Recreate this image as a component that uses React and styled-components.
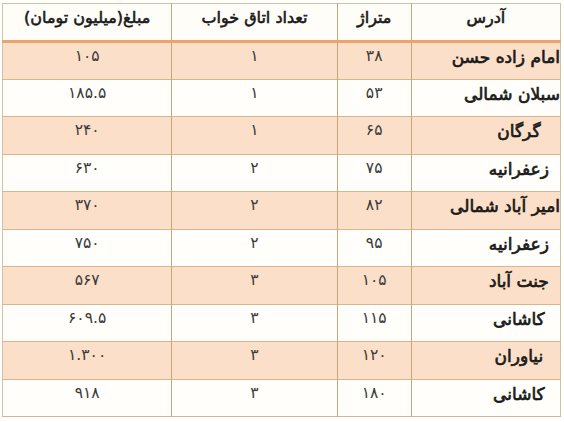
import React from 'react'
import styled, { createGlobalStyle } from 'styled-components'

const rows = [
  ['امام زاده حسن', '۳۸', '۱', '۱۰۵'],
  ['سبلان شمالی', '۵۳', '۱', '۱۸۵.۵'],
  ['گرگان', '۶۵', '۱', '۲۴۰'],
  ['زعفرانیه', '۷۵', '۲', '۶۳۰'],
  ['امیر آباد شمالی', '۸۲', '۲', '۳۷۰'],
  ['زعفرانیه', '۹۵', '۲', '۷۵۰'],
  ['جنت آباد', '۱۰۵', '۳', '۵۶۷'],
  ['کاشانی', '۱۱۵', '۳', '۶۰۹.۵'],
  ['نیاوران', '۱۲۰', '۳', '۱.۳۰۰'],
  ['کاشانی', '۱۸۰', '۳', '۹۱۸']
]

const GlobalStyle = createGlobalStyle`
  body {
    margin: 0;
    background: #ffffff;
    font-family: "DejaVu Sans", Tahoma, sans-serif;
  }
`

const Page = styled.div`
  padding: 3px 3px 0 2px;
`

const Table = styled.table`
  direction: rtl;
  width: 559px;
  border-collapse: collapse;
  border: 1px solid #cdc4a3;
  table-layout: fixed;
`

const HeadCell = styled.th`
  width: ${p => p.w}px;
  height: 38px;
  box-sizing: border-box;
  padding: 4px 0 0;
  vertical-align: top;
  background: #fffdf8;
  border-left: 1px solid #c9a57e;
  border-bottom: 3px solid #eaa46c;
  color: #1a1a1a;
  font-size: 16px;
  font-weight: normal;
  -webkit-text-stroke: 0.6px #1a1a1a;
  line-height: 1.2;
  text-align: center;
  white-space: nowrap;
  &:last-child { border-left: none; }
`

const Row = styled.tr`
  background: ${p => (p.alt ? '#fbdfc8' : '#fffefa')};
  border-bottom: 1px solid #d6b591;
`

const Cell = styled.td`
  height: 37.5px;
  box-sizing: border-box;
  padding: ${p => (p.bold ? '4px 0 0 66px' : '4px 0 0')};
  vertical-align: top;
  border-left: 1px solid #c9a57e;
  text-align: center;
  color: ${p => (p.bold ? '#1a1a1a' : '#3a3a3a')};
  font-size: ${p => (p.bold ? '17px' : '15.5px')};
  font-weight: normal;
  -webkit-text-stroke: ${p => (p.bold ? '0.7px #1a1a1a' : '0')};
  line-height: 1.2;
  white-space: nowrap;
  &:last-child { border-left: none; }
`

export default function App () {
  return (
    <Page>
      <GlobalStyle />
      <Table>
        <thead>
          <tr>
            <HeadCell w={149}>آدرس</HeadCell>
            <HeadCell w={74}>متراژ</HeadCell>
            <HeadCell w={165}>تعداد اتاق خواب</HeadCell>
            <HeadCell w={169}>مبلغ(میلیون تومان)</HeadCell>
          </tr>
        </thead>
        <tbody>
          {rows.map((r, i) => (
            <Row key={i} alt={i % 2 === 0}>
              <Cell bold>{r[0]}</Cell>
              <Cell>{r[1]}</Cell>
              <Cell>{r[2]}</Cell>
              <Cell>{r[3]}</Cell>
            </Row>
          ))}
        </tbody>
      </Table>
    </Page>
  )
}
